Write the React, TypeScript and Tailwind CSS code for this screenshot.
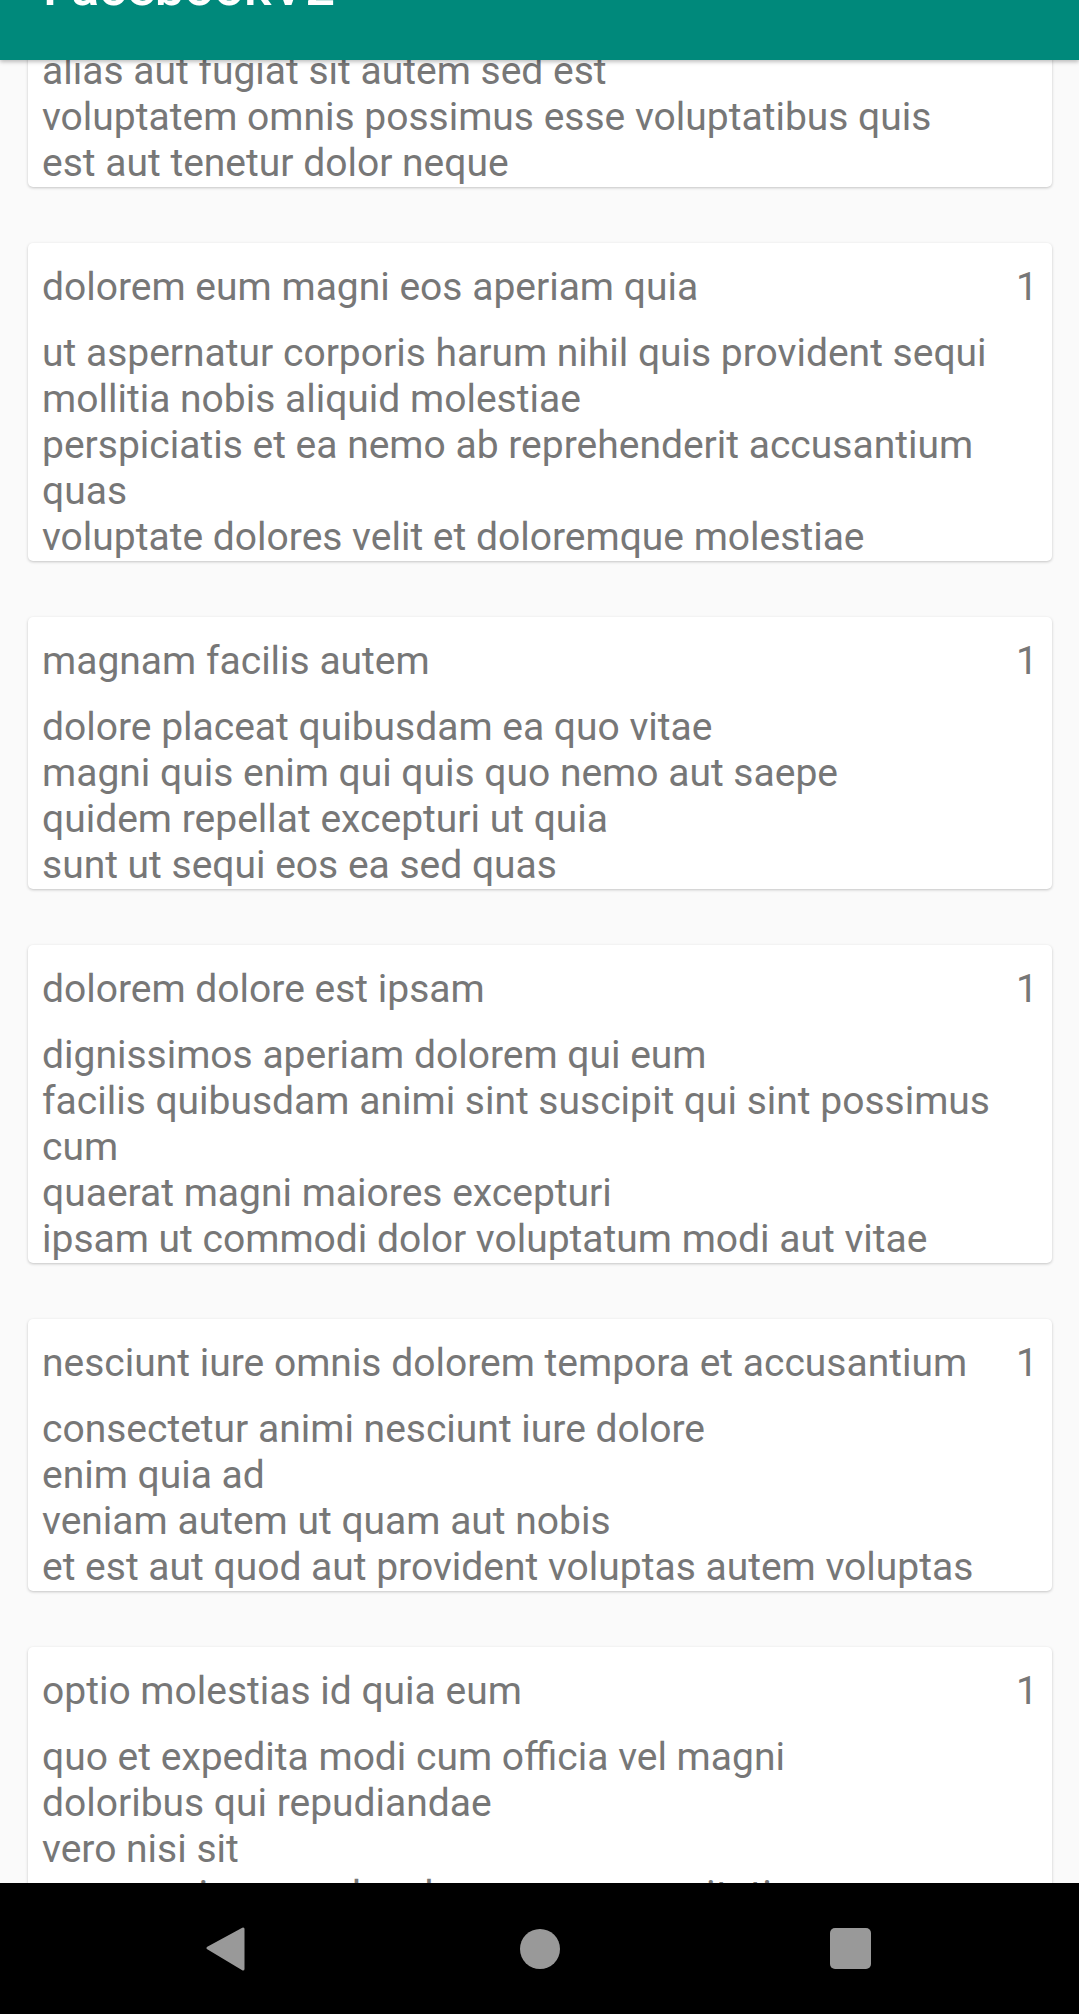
const posts = [
  {
    title: "nesciunt quas odio",
    body: [
      "repudiandae veniam quaerat sunt sed",
      "alias aut fugiat sit autem sed est",
      "voluptatem omnis possimus esse voluptatibus quis",
      "est aut tenetur dolor neque",
    ],
  },
  {
    title: "dolorem eum magni eos aperiam quia",
    body: [
      "ut aspernatur corporis harum nihil quis provident sequi",
      "mollitia nobis aliquid molestiae",
      "perspiciatis et ea nemo ab reprehenderit accusantium quas",
      "voluptate dolores velit et doloremque molestiae",
    ],
  },
  {
    title: "magnam facilis autem",
    body: [
      "dolore placeat quibusdam ea quo vitae",
      "magni quis enim qui quis quo nemo aut saepe",
      "quidem repellat excepturi ut quia",
      "sunt ut sequi eos ea sed quas",
    ],
  },
  {
    title: "dolorem dolore est ipsam",
    body: [
      "dignissimos aperiam dolorem qui eum",
      "facilis quibusdam animi sint suscipit qui sint possimus cum",
      "quaerat magni maiores excepturi",
      "ipsam ut commodi dolor voluptatum modi aut vitae",
    ],
  },
  {
    title: "nesciunt iure omnis dolorem tempora et accusantium",
    body: [
      "consectetur animi nesciunt iure dolore",
      "enim quia ad",
      "veniam autem ut quam aut nobis",
      "et est aut quod aut provident voluptas autem voluptas",
    ],
  },
  {
    title: "optio molestias id quia eum",
    body: [
      "quo et expedita modi cum officia vel magni",
      "doloribus qui repudiandae",
      "vero nisi sit",
      "quos veniam quod sed accusamus veritatis error",
    ],
  },
];

function PostCard({ title, body }: { title: string; body: string[] }) {
  return (
    <div className="bg-white rounded-[5px] shadow-[0_1px_3px_rgba(0,0,0,0.22)] pt-[21px] pb-[1px] pl-[14px] pr-[14px]">
      <div className="flex items-start">
        <div className="flex-1 min-w-0">{title}</div>
        <div className="shrink-0 ml-[20px]">1</div>
      </div>
      <div className="mt-[20px]">
        {body.map((line) => (
          <div key={line}>{line}</div>
        ))}
      </div>
    </div>
  );
}

export default function App() {
  return (
    <div className="h-[2014px] flex flex-col bg-[#fafafa] font-['Roboto',sans-serif] overflow-hidden">
      {/* toolbar, scrolled mostly out of view */}
      <header className="relative z-10 h-[60px] shrink-0 overflow-hidden bg-[#00897b] shadow-[0_2px_4px_rgba(0,0,0,0.25)]">
        <div className="-mt-[39px] pl-[43px] text-white font-medium text-[52.5px] leading-[52.5px]">
          FacebookV2
        </div>
      </header>

      <main className="flex-1 overflow-hidden">
        <div className="-mt-[145px] pl-[28px] pr-[27px] flex flex-col gap-[56px] text-[#777777] text-[39px] leading-[46px]">
          {posts.map((p) => (
            <PostCard key={p.title} title={p.title} body={p.body} />
          ))}
        </div>
      </main>

      {/* android nav bar */}
      <nav className="h-[131px] shrink-0 bg-black flex items-center">
        <div className="ml-[205px] w-[40px] h-[46px]">
          <svg width="40" height="46" viewBox="0 0 40 46">
            <polygon
              points="3,22 38,3 38,43"
              fill="#999999"
              stroke="#999999"
              strokeWidth="3"
              strokeLinejoin="round"
            />
          </svg>
        </div>
        <div className="ml-[275px] w-[40px] h-[40px] rounded-full bg-[#999999]" />
        <div className="ml-[270px] w-[41px] h-[41px] rounded-[5px] bg-[#999999]" />
      </nav>
    </div>
  );
}
